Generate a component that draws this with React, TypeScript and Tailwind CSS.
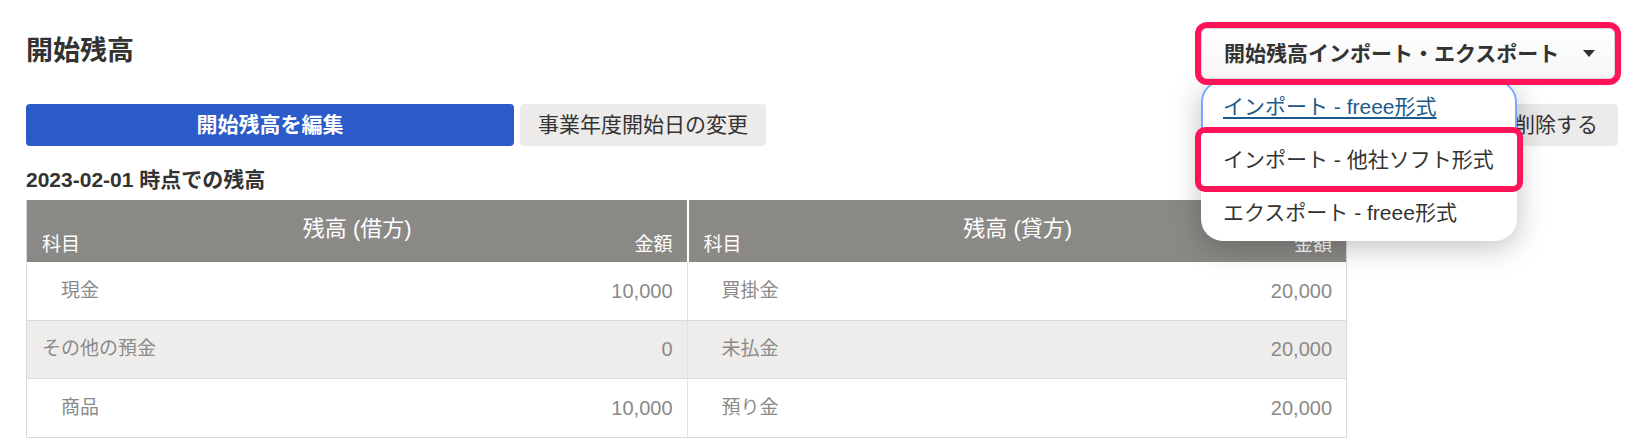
import React from 'react'

const debitRows = [
  { name: '現金', amount: '10,000', indent: true },
  { name: 'その他の預金', amount: '0', indent: false },
  { name: '商品', amount: '10,000', indent: true },
]

const creditRows = [
  { name: '買掛金', amount: '20,000', indent: true },
  { name: '未払金', amount: '20,000', indent: true },
  { name: '預り金', amount: '20,000', indent: true },
]

function HeaderHalf({ title, divider }: { title: string; divider?: boolean }) {
  return (
    <div className={`flex flex-col pl-[15px] pr-[14px] pt-[15px] ${divider ? 'border-l-2 border-white' : ''}`}>
      <div className="text-center text-[22px] leading-[28px]">{title}</div>
      <div className="-mt-[8px] flex justify-between text-[19px] leading-[20px]">
        <span>科目</span>
        <span>金額</span>
      </div>
    </div>
  )
}

function BodyCell({ name, amount, indent, divider }: { name: string; amount: string; indent: boolean; divider?: boolean }) {
  return (
    <div className={`flex items-center justify-between pl-[15px] pr-[14px] ${divider ? 'border-l border-[#e2e0dd]' : ''}`}>
      <span className={indent ? 'pl-[19px]' : ''}>{name}</span>
      <span className="text-[20px]">{amount}</span>
    </div>
  )
}

export default function App() {
  return (
    <div className="min-h-screen bg-white pl-[26px] pr-[23px] font-['Liberation_Sans','Noto_Sans_CJK_JP',sans-serif] text-[#333]">
      {/* Title + import/export dropdown */}
      <div className="flex items-start justify-between pt-[28px]">
        <h1 className="mt-[5px] text-[27px] font-bold leading-[36px]">開始残高</h1>

        <div className="relative mr-[3px]">
          <button className="relative z-10 flex h-[51px] w-[414px] items-center justify-between rounded-[6px] border border-[#d6d6d6] bg-gradient-to-b from-white to-[#f6f6f6] pl-[22px] pr-[19px] text-[21px] font-bold outline-[6px] outline-[#ff145a]">
            <span>開始残高インポート・エクスポート</span>
            <svg width="12" height="7" viewBox="0 0 12 7" className="fill-[#333]">
              <path d="M0 0h12L6 7z" />
            </svg>
          </button>

          <div className="absolute left-0 top-full mt-[1px] w-[316px] rounded-[22px] bg-white pb-[2px] text-[21px] shadow-[0_6px_30px_rgba(0,0,0,0.25)]">
            <div className="flex h-[53px] items-center rounded-t-[22px] rounded-b-[4px] pl-[22px] text-[#1b5a8a] underline underline-offset-[3px] outline-2 -outline-offset-2 outline-[#7ba7ff]">
              インポート - freee形式
            </div>
            <div className="relative z-10 flex h-[53px] items-center rounded-[4px] pl-[22px] outline-[6px] outline-[#ff145a]">
              インポート - 他社ソフト形式
            </div>
            <div className="flex h-[53px] items-center pl-[22px]">エクスポート - freee形式</div>
          </div>
        </div>
      </div>

      {/* Action buttons */}
      <div className="mt-[25px] flex h-[42px] gap-[6px] text-[21px]">
        <button className="w-[488px] rounded-[4px] bg-[#2a5bc9] font-bold text-white">開始残高を編集</button>
        <button className="rounded-[4px] bg-[#ecebe9] px-[18px]">事業年度開始日の変更</button>
        <button className="ml-auto rounded-[4px] bg-[#ecebe9] px-[20px]">開始残高を削除する</button>
      </div>

      <h2 className="mt-[20px] text-[21px] font-bold leading-[28px]">2023-02-01 時点での残高</h2>

      {/* Balance table */}
      <div className="mt-[6px] w-[1321px] border-x border-[#dcdad7]">
        <div className="grid h-[62px] grid-cols-2 bg-[#8b8986] text-white">
          <HeaderHalf title="残高 (借方)" />
          <HeaderHalf title="残高 (貸方)" divider />
        </div>
        {debitRows.map((row, i) => (
          <div
            key={row.name}
            className={`grid h-[58.5px] grid-cols-2 border-b border-[#dcdad7] text-[19px] text-[#8a8a8a] ${i % 2 === 1 ? 'bg-[#efedeb]' : 'bg-white'}`}
          >
            <BodyCell {...row} />
            <BodyCell {...creditRows[i]} divider />
          </div>
        ))}
      </div>
    </div>
  )
}
